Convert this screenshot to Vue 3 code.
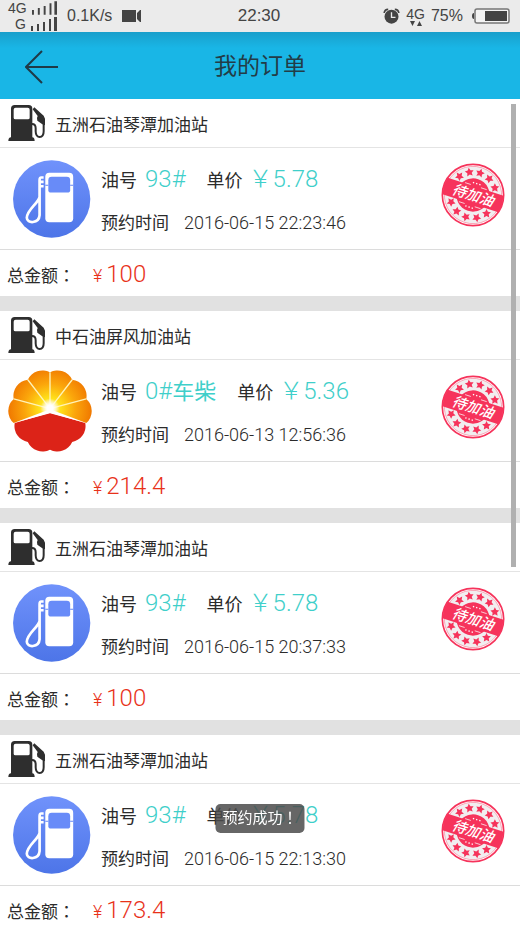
<script setup>
import { ref } from 'vue'

const orders = ref([
  { id: 1, station: '五洲石油琴潭加油站', brand: 'pump', grade: '93#', kind: '', price: '5.78', time: '2016-06-15 22:23:46', total: '100' },
  { id: 2, station: '中石油屏风加油站', brand: 'petro', grade: '0#', kind: '车柴', price: '5.36', time: '2016-06-13 12:56:36', total: '214.4' },
  { id: 3, station: '五洲石油琴潭加油站', brand: 'pump', grade: '93#', kind: '', price: '5.78', time: '2016-06-15 20:37:33', total: '100' },
  { id: 4, station: '五洲石油琴潭加油站', brand: 'pump', grade: '93#', kind: '', price: '5.78', time: '2016-06-15 22:13:30', total: '173.4' }
])

const toast = ref('预约成功')

const star = (cx, cy, r, turn) => {
  const pts = []
  for (let i = 0; i < 10; i++) {
    const a = ((i * 36 + turn - 90) * Math.PI) / 180
    const d = i % 2 ? r * 0.5 : r
    pts.push(`${(cx + d * Math.cos(a)).toFixed(1)},${(cy + d * Math.sin(a)).toFixed(1)}`)
  }
  return pts.join(' ')
}

// Stars run along the two open arcs of the stamp, above and below the band.
const stars = [-54, -27, 0, 27, 54, 126, 153, 180, 207, 234].map((deg) => {
  const a = ((deg - 90) * Math.PI) / 180
  return star(96 + 69 * Math.cos(a), 96 + 69 * Math.sin(a), 14, deg)
})
</script>

<template>
  <div class="screen">
    <div class="status">
      <div class="status-side">
        <div class="networks">
          <div v-for="n in ['4G', 'G']" :key="n" class="network">
            <span>{{ n }}</span>
            <svg class="bars" viewBox="0 0 26 14" aria-hidden="true">
              <path d="M0 9h2v5H0zM6 7h2v7H6zM12 5h2v9h-2zM18 2h2v12h-2zM23 0h3v14h-3z" fill="#444" />
            </svg>
          </div>
        </div>
        <span class="speed">0.1K/s</span>
        <svg class="camera" viewBox="0 0 20 12" aria-hidden="true">
          <path d="M0 0h14v12H0zM15 3l3-3h1v12h-1l-3-3z" fill="#444" />
        </svg>
      </div>
      <span class="clock">22:30</span>
      <div class="status-side end">
        <svg class="alarm" viewBox="0 0 50 48" aria-hidden="true">
          <circle cx="25" cy="26" r="21" fill="#444" />
          <path d="M3 15C4 8 9 4 15 4M47 15C46 8 41 4 35 4" fill="none" stroke="#444" stroke-width="5" />
          <path d="M25 13v15h12" fill="none" stroke="#ebebeb" stroke-width="4" />
        </svg>
        <div class="data">
          <span>4G</span>
          <svg viewBox="0 0 12 5" aria-hidden="true">
            <path d="M0 0h5L2.500 5zM7 5h5L9.500 0z" fill="#444" />
          </svg>
        </div>
        <span>75%</span>
        <svg class="battery" viewBox="0 0 38 16" aria-hidden="true">
          <rect x="3" y="1" width="34" height="14" rx="2" fill="#f3f3f3" stroke="#777" stroke-width="1.500" />
          <rect x="13" y="3" width="22" height="10" fill="#444" />
          <path d="M2 5Q0 5 0 8t2 3z" fill="#444" />
        </svg>
      </div>
    </div>

    <header class="bar">
      <button class="back" type="button" aria-label="返回">
        <svg viewBox="0 0 34 34" aria-hidden="true">
          <path d="M17 1 1 17l16 16M1 17h32" fill="none" stroke="#1f3a47" stroke-width="2" />
        </svg>
      </button>
      <h1>我的订单</h1>
    </header>

    <main class="orders">
      <article v-for="o in orders" :key="o.id" class="order">
        <div class="station">
          <svg viewBox="0 0 111 108" aria-hidden="true">
            <path fill-rule="evenodd" fill="#2e2e2e" d="M20 0h42q11 0 11 11v86q7 1 7 11H1q0-10 8-11V11q0-11 11-11zm3 8q-6 0-6 6v24q0 5 5 5h38q5 0 5-5V14q0-6-6-6z" />
            <path d="M72 57c9 0 11 4 11 13v9c0 10 5 17 12 17 8 0 12-7 12-17V42" fill="none" stroke="#2e2e2e" stroke-width="6" stroke-linejoin="round" />
            <path d="M79 7l28 25 4 9v20l-8-3-15-11q-3-8 1-14L74 13z" fill="#2e2e2e" />
          </svg>
          <h2>{{ o.station }}</h2>
        </div>

        <div class="detail">
          <svg v-if="o.brand === 'pump'" class="logo" viewBox="-8 -10 250 250" aria-hidden="true">
            <defs>
              <linearGradient :id="'blue' + o.id" x1="0" y1="0" x2="0" y2="1">
                <stop offset="0" stop-color="#7092fb" />
                <stop offset="1" stop-color="#4d75e8" />
              </linearGradient>
            </defs>
            <circle cx="122" cy="115" r="115" :fill="`url(#blue${o.id})`" />
            <rect x="103" y="37" width="83" height="147" rx="12" fill="#fff" />
            <path d="M112 59q0-10 10-10h45q10 0 10 10v30q0 7-8 7h-49q-8 0-8-7z" fill="#688bf8" />
            <path d="M103 74h9M177 74h9" stroke="#6487f6" stroke-width="3" />
            <path d="M98 51h-7q-5 0-5 8v50c-3 18-38 38-38 62 0 18 36 18 38-8V90M86 64h12M86 77h12" fill="none" stroke="#fff" stroke-width="8" stroke-linejoin="round" />
          </svg>
          <svg v-else class="logo" viewBox="0 0 250 250" aria-hidden="true">
            <defs>
              <radialGradient id="sun" gradientUnits="userSpaceOnUse" cx="125" cy="118" r="125">
                <stop offset="0" stop-color="#fffbd0" />
                <stop offset="0.250" stop-color="#ffe11a" />
                <stop offset="0.600" stop-color="#fba60b" />
                <stop offset="1" stop-color="#f07800" />
              </radialGradient>
              <radialGradient id="glow">
                <stop offset="0.300" stop-color="#fff" />
                <stop offset="1" stop-color="#fff" stop-opacity="0" />
              </radialGradient>
            </defs>
            <path d="M17 161A48 48 0 0 1 17 89A48 48 0 0 1 59 32A48 48 0 0 1 125 10A48 48 0 0 1 191 32A48 48 0 0 1 233 89A48 48 0 0 1 233 161L125 127z" fill="url(#sun)" />
            <path d="M125 118V10M125 118 59 32M125 118 191 32M125 118 17 89M125 118 233 89" stroke="#fff3b8" stroke-width="4" />
            <circle cx="125" cy="116" r="28" fill="url(#glow)" />
            <path d="M20 161 125 130 230 161A48 48 0 0 1 191 217A48 48 0 0 1 125 240A48 48 0 0 1 59 217A48 48 0 0 1 20 161z" fill="#dc2318" />
            <path d="M17 161 125 120 233 161 125 132z" fill="#fff" />
          </svg>

          <div class="facts">
            <div class="fact">
              <span class="name">油号</span>
              <span class="value">{{ o.grade }}<b v-if="o.kind">{{ o.kind }}</b></span>
              <span class="name price">单价</span>
              <span class="value">￥{{ o.price }}</span>
            </div>
            <div class="fact booked">
              <span>预约时间</span>
              <time>{{ o.time }}</time>
            </div>
          </div>

          <svg class="stamp" viewBox="0 0 192 192" role="img" aria-label="待加油">
            <circle cx="96" cy="96" r="92" fill="#fff" stroke="#f6335b" stroke-width="5" />
            <g transform="rotate(18 96 96)">
              <circle cx="96" cy="96" r="86" fill="#f1eef0" stroke="#f98aa0" stroke-width="2" />
              <circle cx="96" cy="96" r="50" fill="#f6335b" />
              <polygon v-for="(s, i) in stars" :key="i" :points="s" fill="#f6335b" />
              <path d="M8 70H184L188 96 184 122H8L4 96z" fill="#f6335b" />
              <path d="M62 68h18M112 68h18M62 128h18M112 128h18" stroke="#fff" stroke-width="2" />
              <path d="M84 60h24M84 134h24" stroke="#fff" stroke-width="4" stroke-dasharray="4 6" />
              <text x="96" y="112" text-anchor="middle" class="stamp-text">待加油</text>
            </g>
          </svg>
        </div>

        <div class="total">
          <span>总金额<span class="mark">：</span></span>
          <strong><small>¥</small>{{ o.total }}</strong>
        </div>
      </article>
      <div class="scrollbar"></div>
    </main>

    <div class="toast" role="status">{{ toast }}<span class="mark">！</span></div>
  </div>
</template>

<style>
body {
  background: #fff;
}
</style>

<style scoped>
.screen {
  font-family: Roboto, 'Noto Sans CJK SC', sans-serif;
  font-weight: 300;
  color: #2b2b2b;
  height: 100vh;
  display: flex;
  flex-direction: column;
  overflow: hidden;
}

.mark {
  font-family: 'Noto Sans CJK TC', sans-serif;
  line-height: 1;
}

.status {
  flex: none;
  height: 32px;
  padding: 0 10px 0 8px;
  display: grid;
  grid-template-columns: 1fr auto 1fr;
  align-items: center;
  background: #ebebeb;
  color: #444;
  font-family: 'Liberation Sans', sans-serif;
  font-size: 16px;
  font-weight: 400;
}

.status-side {
  display: flex;
  align-items: center;
  gap: 10px;
}

.status-side.end {
  justify-content: flex-end;
  gap: 6px;
}

.networks {
  width: 49px;
}

.network {
  display: flex;
  justify-content: flex-end;
  align-items: center;
  gap: 5px;
  font-size: 14px;
  line-height: 16px;
}

.bars {
  width: 26px;
  height: 14px;
}

.clock {
  font-size: 17px;
}

.camera {
  width: 20px;
  height: 12px;
}

.alarm {
  width: 17px;
  height: 16px;
}

.data {
  display: flex;
  flex-direction: column;
  align-items: center;
  font-size: 14px;
  line-height: 14px;
}

.data svg {
  width: 12px;
  height: 5px;
}

.battery {
  width: 38px;
  height: 16px;
  margin-left: 3px;
}

.bar {
  flex: none;
  height: 67px;
  padding: 2px 25px 0;
  display: grid;
  grid-template-columns: 1fr auto 1fr;
  align-items: center;
  background: linear-gradient(#199fcb, #19b6e6 16px);
  box-sizing: border-box;
}

.back {
  justify-self: start;
  padding: 0;
  border: 0;
  background: none;
}

.back svg {
  display: block;
  width: 34px;
  height: 34px;
}

h1 {
  margin: 0;
  font-size: 23px;
  font-weight: 400;
  line-height: 32px;
  color: #223c47;
}

.orders {
  position: relative;
  flex: 1;
  min-height: 0;
  overflow: hidden;
}

.order {
  border-bottom: 15px solid #e1e1e1;
}

.station {
  height: 48px;
  padding: 0 8px;
  display: flex;
  align-items: center;
  gap: 10px;
  border-bottom: 1px solid #e4e4e4;
}

.station svg {
  width: 37px;
  height: 36px;
}

h2 {
  margin: 0;
  font-size: 17px;
  font-weight: 400;
}

.detail {
  height: 101px;
  padding: 0 15px 0 8px;
  display: flex;
  align-items: center;
  border-bottom: 1px solid #dcdcdc;
}

.logo {
  width: 84px;
  height: 84px;
}

.facts {
  flex: 1;
  padding: 4px 0 0 9px;
}

.fact {
  height: 43px;
  display: flex;
  align-items: baseline;
  font-size: 18px;
  line-height: 43px;
}

.name {
  font-weight: 400;
}

.price {
  margin-left: 21px;
}

.value {
  margin-left: 8px;
  font-size: 24px;
  color: #3fcfca;
}

.price + .value {
  margin-left: 6px;
}

.value b {
  font-size: 22px;
  font-weight: 400;
  line-height: 1;
}

.booked {
  gap: 15px;
  font-size: 17px;
  font-weight: 400;
}

.booked time {
  font-size: 18px;
  font-weight: 300;
}

.stamp {
  width: 64px;
  height: 64px;
  margin-bottom: 8px;
}

.stamp-text {
  font-size: 43px;
  font-style: italic;
  font-weight: 500;
  fill: #fff;
}

.total {
  height: 46px;
  padding: 2px 7px 0;
  display: flex;
  align-items: center;
  gap: 18px;
  font-size: 17px;
  font-weight: 400;
  box-sizing: border-box;
}

.total strong {
  font-size: 24px;
  font-weight: 300;
  color: #e8321a;
}

.total small {
  margin-right: 4px;
  font-size: 18px;
  font-weight: 300;
}

.scrollbar {
  position: absolute;
  top: 5px;
  right: 4px;
  width: 5px;
  height: 56%;
  background: #b0b0b0;
}

.toast {
  position: fixed;
  left: 50%;
  bottom: 93px;
  transform: translateX(-50%);
  padding: 0 7px;
  border-radius: 5px;
  background: rgba(75, 75, 75, 0.85);
  color: #fff;
  font-size: 15px;
  font-weight: 400;
  line-height: 29px;
  white-space: nowrap;
}
</style>
